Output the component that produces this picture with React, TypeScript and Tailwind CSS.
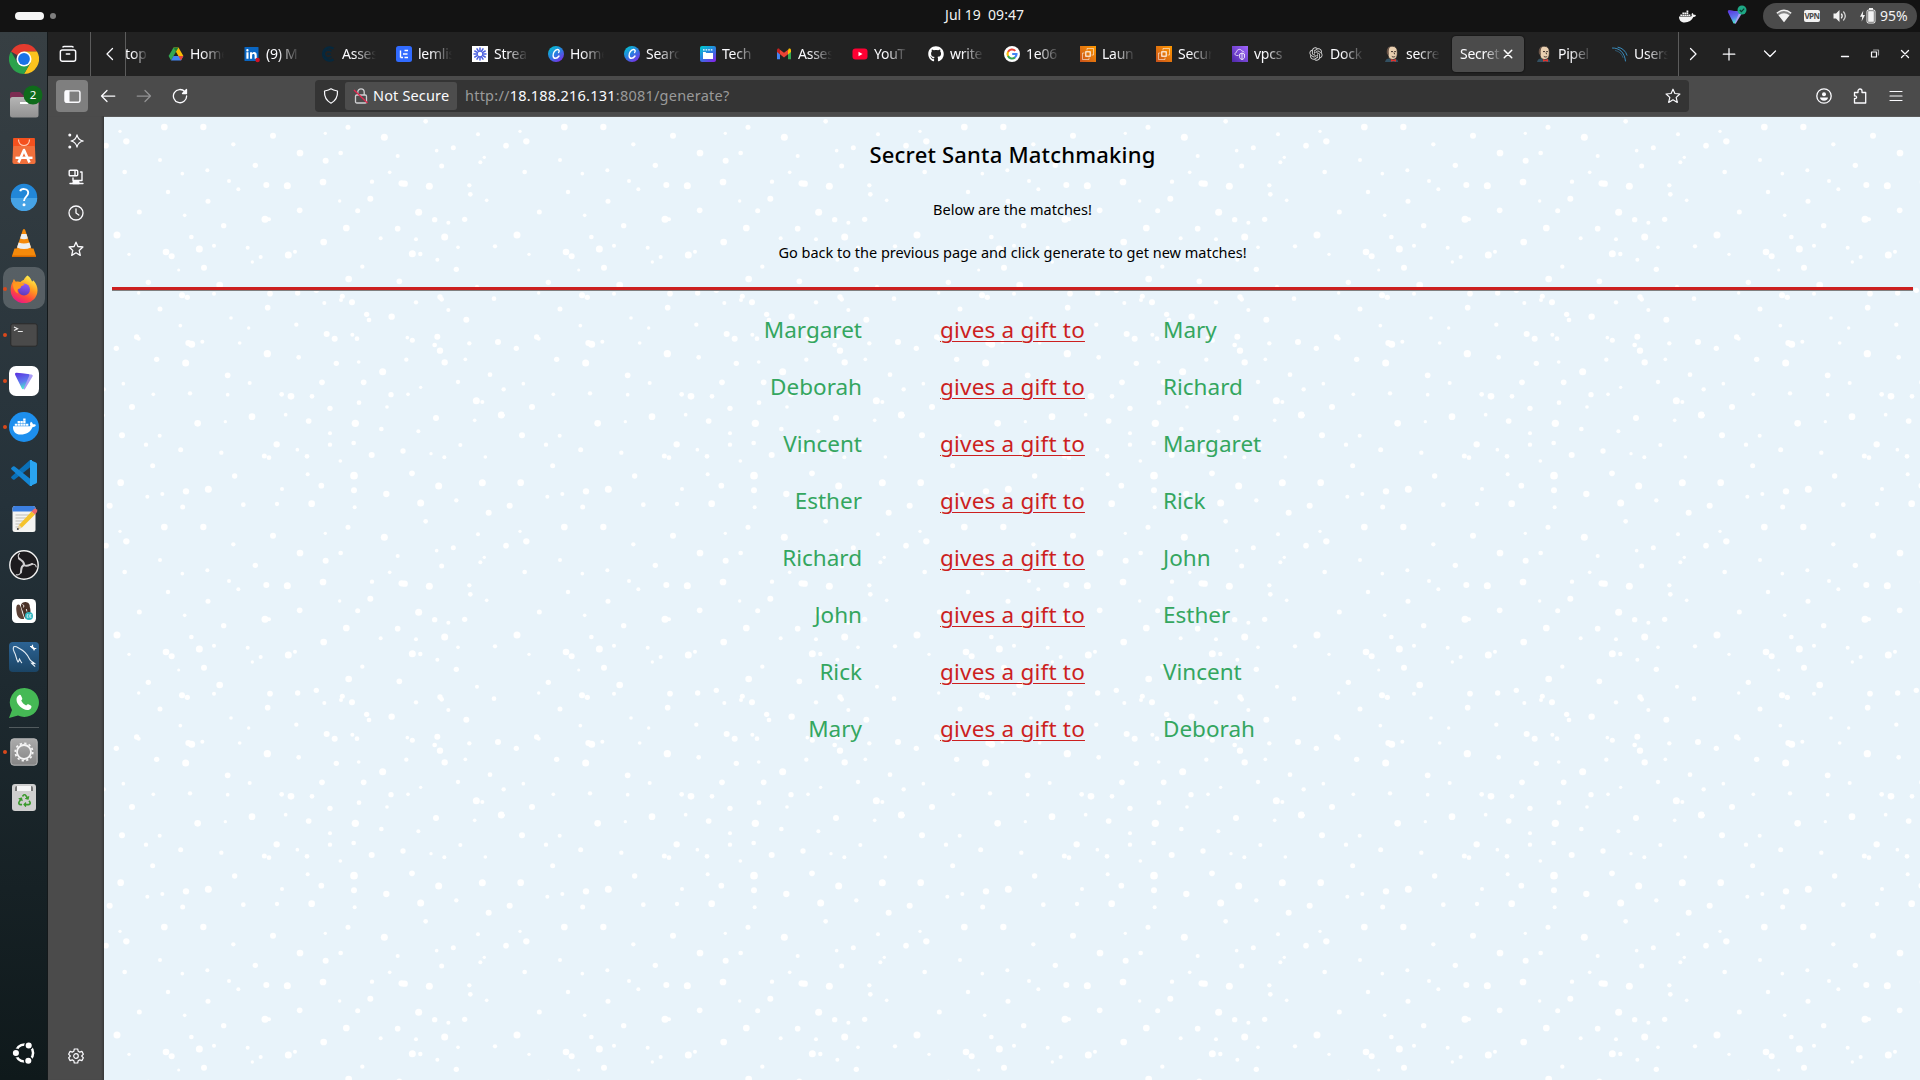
import type { ReactNode } from "react";
import { FaDocker, FaGithub, FaRecycle } from "react-icons/fa";
import { RiOpenaiFill } from "react-icons/ri";

/* Snowflakes of one 400px tile, on a 1200-unit grid: x, y, radius */
const FLAKES: number[][] = [
  [181, 30, 10], [298, 30, 9.5], [48, 43, 5], [67, 73, 9.5], [6, 86, 8.5], [1206, 86, 8.5], [388, 82, 6.5], [507, 56, 9], [664, 49, 5], [732, 31, 7.5],
  [841, 61, 10.5], [965, 13, 7], [1122, 52, 6], [1048, 92, 7.5], [998, 101, 5.5], [588, 108, 10], [710, 108, 7], [665, 131, 9], [881, 117, 6], [1141, 121, 5],
  [1129, 136, 6], [1013, 147, 7.5], [168, 129, 6], [62, 165, 7], [310, 160, 6], [235, 170, 5.5], [454, 145, 8], [375, 192, 6], [403, 217, 6], [487, 204, 9],
  [550, 206, 10.5], [657, 195, 10], [804, 194, 6.5], [857, 166, 5.5], [893, 199, 9.5], [902, 200, 9.5], [976, 208, 10.5], [1096, 205, 6.5], [1099, 232, 7], [1148, 250, 5.5],
  [799, 245, 9], [707, 252, 5], [761, 281, 7.5], [944, 286, 10.5], [992, 308, 8], [1033, 317, 6], [1082, 307, 8], [192, 225, 6.5], [312, 253, 7.5], [106, 285, 7.5],
  [242, 295, 5.5], [359, 326, 8], [483, 307, 10.5], [495, 307, 6], [587, 280, 8.5], [727, 333, 10], [881, 335, 8.5], [830, 364, 6], [936, 367, 6], [1022, 360, 10.5],
  [1062, 391, 5.5], [1173, 388, 6.5], [39, 354, 10.5], [262, 360, 7], [286, 396, 10.5], [330, 386, 6], [431, 392, 6], [470, 420, 6], [445, 435, 5], [553, 414, 10.5],
  [573, 404, 6], [659, 375, 10], [75, 412, 5], [186, 405, 10], [203, 418, 9], [224, 459, 4.5], [300, 452, 9], [133, 496, 8], [347, 504, 10], [775, 449, 6.5],
  [734, 486, 10], [886, 493, 8.5], [925, 410, 10.5], [949, 411, 6.5], [1000, 428, 6], [1057, 457, 8], [1119, 509, 6], [104, 528, 5], [234, 535, 9], [250, 541, 8],
  [330, 530, 6], [498, 530, 8.5], [581, 528, 8], [637, 520, 8], [661, 558, 6], [715, 538, 7.5], [711, 549, 6], [744, 556, 9], [936, 556, 6.5], [1008, 540, 8],
  [1013, 547, 7], [1170, 545, 7], [1033, 579, 6], [168, 576, 7.5], [381, 603, 5.5], [491, 572, 8.5], [788, 592, 8], [795, 609, 7], [863, 599, 9.5], [1087, 608, 9],
  [229, 626, 5.5], [434, 633, 5], [577, 623, 6.5], [668, 651, 9], [692, 665, 9], [745, 653, 6], [759, 665, 7], [910, 662, 5.5], [925, 670, 7.5], [1000, 659, 9],
  [992, 684, 7], [1008, 701, 9.5], [1096, 679, 6.5], [1182, 675, 9], [98, 660, 8], [104, 665, 6], [37, 694, 8], [253, 678, 9], [263, 682, 10.5], [295, 674, 6],
  [407, 678, 5.5], [158, 727, 8], [245, 738, 10.5], [490, 710, 11], [584, 721, 7], [697, 739, 8], [764, 735, 5.5], [907, 728, 6.5], [1022, 736, 9.5], [1084, 727, 5.5],
  [836, 764, 10.5], [371, 775, 8.5], [437, 798, 6], [654, 796, 8.5], [779, 796, 8.5], [1062, 795, 6.5], [1158, 773, 7], [950, 811, 5], [58, 800, 5.5], [-1, 817, 6.5],
  [1199, 817, 6.5], [148, 832, 5.5], [258, 829, 6.5], [371, 833, 5.5], [533, 832, 7], [561, 838, 10], [624, 838, 7], [861, 833, 8], [912, 832, 5.5], [765, 857, 7],
  [849, 870, 5.5], [678, 874, 8], [1117, 851, 10.5], [1135, 855, 6], [1192, 894, 10.5], [84, 870, 9], [-2, 895, 5], [281, 919, 10], [444, 899, 10], [364, 914, 5],
  [545, 893, 5.5], [614, 912, 8.5], [754, 919, 11], [996, 903, 9], [1112, 910, 5.5], [832, 936, 7], [943, 943, 6], [54, 955, 9], [167, 956, 6], [678, 949, 6],
  [126, 983, 6.5], [230, 998, 7.5], [518, 982, 9.5], [580, 998, 5.5], [678, 983, 6.5], [749, 978, 7], [1069, 984, 6], [352, 1007, 6.5], [897, 1002, 8], [981, 1010, 5],
  [803, 1014, 9], [481, 1017, 7.5], [495, 1022, 7], [609, 1018, 7], [1021, 1021, 6], [1144, 1020, 5.5], [709, 1032, 5.5], [146, 1046, 7.5], [392, 1077, 8], [611, 1072, 6],
  [750, 1076, 11.5], [924, 1069, 8.5], [50, 1097, 10], [652, 1106, 8.5], [1004, 1107, 10.5], [1135, 1097, 10.5], [246, 1123, 9.5], [313, 1117, 10.5], [534, 1116, 6], [750, 1120, 9],
  [175, 1131, 6], [130, 1139, 6], [847, 1131, 9.5], [17, 1166, 9], [236, 1170, 7.5], [418, 1163, 7], [519, 1161, 6.5], [623, 1160, 10], [752, 1171, 6], [950, 1158, 10.5],
  [1057, 1150, 6.5], [1154, 1187, 9],
];

function Snow() {
  return (
    <svg className="absolute inset-0 h-full w-full" aria-hidden="true">
      <defs>
        <pattern id="snow" width="400" height="400" patternUnits="userSpaceOnUse">
          <g transform="scale(0.33333)" fill="#ffffff">
            {FLAKES.map(([x, y, r]) => (
              <circle key={`${x}-${y}`} cx={x} cy={y} r={r} />
            ))}
          </g>
        </pattern>
      </defs>
      <rect width="100%" height="100%" fill="url(#snow)" />
    </svg>
  );
}

/* ---------- stroke icon helper ---------- */
function Line({ children, className = "", size = 16, w = 1.25 }: { children: ReactNode; className?: string; size?: number; w?: number }) {
  return (
    <svg
      className={`shrink-0 ${className}`}
      width={size}
      height={size}
      viewBox="0 0 16 16"
      fill="none"
      stroke="currentColor"
      strokeWidth={w}
      strokeLinecap="round"
      strokeLinejoin="round"
    >
      {children}
    </svg>
  );
}

const STAR = "M8 1.2 9.9 5.5 14.9 6 11.2 9.4 12.3 14.4 8 11.8 3.7 14.4 4.8 9.4 1.1 6 6.1 5.5Z";

/* ---------- favicons ---------- */
const DriveIcon = () => (
  <svg width="16" height="16" viewBox="0 0 16 16">
    <path d="M5.5 1.5h5L15.4 10h-5z" fill="#fbbc05" />
    <path d="M5.5 1.5 8 5.8 3 14.4.6 10z" fill="#34a853" />
    <path d="M5.5 1.5h5L8 5.8z" fill="#188038" />
    <path d="M5.5 10h9.9L13 14.4H3z" fill="#4285f4" />
    <path d="M10.4 10h5L13 14.4z" fill="#ea4335" />
  </svg>
);
const LinkedinIcon = () => (
  <svg width="16" height="16" viewBox="0 0 16 16" className="overflow-visible">
    <rect x="0.5" y="1" width="14" height="14" rx="0.6" fill="#0a66c2" />
    <path d="M2.4 6.3h2.1v6.5H2.4zM3.4 3.1a1.2 1.2 0 1 1 0 2.4 1.2 1.2 0 0 1 0-2.4M6 6.3h2v.9c1.1-1.7 4.7-1.6 4.7 1.7v3.9h-2.1V9.4c0-1.9-2.5-1.8-2.5 0v3.4H6z" fill="#fff" />
    <circle cx="13.6" cy="14" r="2.2" fill="#d11124" />
  </svg>
);
const AssessIcon = () => (
  <svg width="16" height="16" viewBox="0 0 16 16" fill="none" stroke="#06283d">
    <path d="M13.5 2.8A6.5 6.5 0 1 0 13.5 13.2" strokeWidth="2.4" />
    <path d="M11.5 5.5A4 4 0 1 0 11.5 10.5M11 8H7" strokeWidth="1.3" />
  </svg>
);
const LemlistIcon = () => (
  <svg width="16" height="16" viewBox="0 0 16 16">
    <rect width="16" height="16" rx="2.5" fill="#316bff" />
    <path d="M4.5 4.5v7M4.5 11.5h2.5M8.5 4.5h3.5M7 8h4.5M8.5 11.5h3.5" stroke="#fff" strokeWidth="1.4" fill="none" />
  </svg>
);
const StreamIcon = () => (
  <svg width="16" height="16" viewBox="0 0 16 16">
    <rect width="16" height="16" fill="#fff" />
    <g stroke="#4a5fe0" strokeWidth="1.5" strokeLinecap="round">
      {[0, 30, 60, 90, 120, 150, 180, 210, 240, 270, 300, 330].map((a) => (
        <path key={a} d="M8 2v2.800" transform={`rotate(${a} 8 8)`} />
      ))}
    </g>
    <circle cx="8" cy="8" r="2.8" fill="none" stroke="#4a5fe0" strokeWidth="1" />
  </svg>
);
const CanvaGradient = () => (
  <linearGradient id="canva" x1="0.1" y1="0" x2="0.8" y2="1">
    <stop offset="0" stopColor="#00c8cf" />
    <stop offset="0.5" stopColor="#2a7fe0" />
    <stop offset="1" stopColor="#7d2ae8" />
  </linearGradient>
);
const CanvaIcon = () => (
  <svg width="16" height="16" viewBox="0 0 16 16">
    <defs><CanvaGradient /></defs>
    <circle cx="8" cy="8" r="8" fill="url(#canva)" />
    <path d="M10.6 6.4c1-1 .7-3-1.1-2.900C7 3.700 4.900 7 5.100 9.600c.2 3.700 3.900 3.400 5.900.4" fill="none" stroke="#fff" strokeWidth="1.4" strokeLinecap="round" />
  </svg>
);
const TechIcon = () => (
  <svg width="16" height="16" viewBox="0 0 16 16">
    <defs><CanvaGradient /></defs>
    <rect width="16" height="16" rx="2" fill="url(#canva)" />
    <path d="M3 3.800h1.600M5.600 3.800h1.600M8.200 3.800h1.600M10.800 3.800h1.600" stroke="#fff" strokeWidth="1.2" />
    <path d="M3 6h2.500l.8.900H13V13H3z" fill="#fff" />
  </svg>
);
const GmailIcon = () => (
  <svg width="16" height="16" viewBox="0 0 16 16">
    <path d="M1 5v8.300h3V7z" fill="#4285f4" />
    <path d="M15 5v8.300h-3V7z" fill="#34a853" />
    <path d="M4 4.200v4.200L1 6V4.200c0-1.500 1.500-2 2.500-1.200z" fill="#c5221f" />
    <path d="M12 4.200v4.200L15 6V4.200c0-1.500-1.500-2-2.500-1.200z" fill="#fbbc04" />
    <path d="M4 3.700 8 6.800l4-3.100v4.500l-4 3.200-4-3.200z" fill="#ea4335" />
  </svg>
);
const YoutubeIcon = () => (
  <svg width="16" height="16" viewBox="0 0 16 16">
    <rect x="0.5" y="2.5" width="15" height="11" rx="3" fill="#ff0033" />
    <path d="M6.500 5.700v4.600L10.500 8z" fill="#fff" />
  </svg>
);
const GithubIcon = () => <FaGithub size={16} color="#fff" />;
const GoogleIcon = () => (
  <svg width="16" height="16" viewBox="0 0 16 16" fill="none" strokeWidth="2.1">
    <circle cx="8" cy="8" r="8" fill="#fff" />
    <path d="M11.300 4.900A4.500 4.500 0 0 0 4 6" stroke="#ea4335" />
    <path d="M4.100 5.800a4.500 4.500 0 0 0 0 4.400" stroke="#fbbc05" />
    <path d="M4 10a4.500 4.500 0 0 0 7 1.400" stroke="#34a853" />
    <path d="M10.900 11.500A4.500 4.500 0 0 0 12.500 8H8.200" stroke="#4285f4" />
  </svg>
);
const Ec2Icon = () => (
  <svg width="16" height="16" viewBox="0 0 16 16" fill="none" stroke="#fff" strokeWidth="0.9">
    <defs>
      <linearGradient id="ec2" x1="0" y1="1" x2="1" y2="0">
        <stop offset="0" stopColor="#c8511b" />
        <stop offset="1" stopColor="#ff9900" />
      </linearGradient>
    </defs>
    <rect width="16" height="16" fill="url(#ec2)" stroke="none" />
    <rect x="5.8" y="5.8" width="4.400" height="4.400" strokeWidth="1.1" />
    <path d="M4.500 7H2.500v6.500H9V11.500M7 4.500V2.500h6.500V9H11.500" opacity="0.6" />
  </svg>
);
const VpcIcon = () => (
  <svg width="16" height="16" viewBox="0 0 16 16" fill="none" stroke="#fff" strokeWidth="0.9">
    <defs>
      <linearGradient id="vpc" x1="0" y1="1" x2="1" y2="0">
        <stop offset="0" stopColor="#4d27a8" />
        <stop offset="1" stopColor="#a166ff" />
      </linearGradient>
    </defs>
    <rect width="16" height="16" fill="url(#vpc)" stroke="none" />
    <path d="M6.500 9.500H4.700C2.500 9.500 2.400 6.500 4.500 6.300 4.600 3 9 2.300 10 5.200c1.500-.2 2 .6 2.200 1.300" opacity="0.8" />
    <path d="M7.700 8 10 7l2.400 1v3.500c0 1-1.200 1.500-2.400 2-1.200-.5-2.300-1-2.300-2zM10 7v6.500" />
  </svg>
);
const OpenAiIcon = () => <RiOpenaiFill size={16} color="#d6d6d6" />;
const JenkinsIcon = () => (
  <svg width="16" height="16" viewBox="0 0 16 16">
    <path d="M1 16c.5-2.500 2-3.500 4-3.500l6 .5c1.800 0 3 1.300 3.200 3z" fill="#335061" />
    <path d="M3.200 6C3 2 5.500.3 8.300.3c3.200 0 5 2 4.900 5.200 0 1.500.3 3-.4 5-.6 2-2.300 3.100-4.300 3-2.500-.1-3.800-1.500-4.200-3.500z" fill="#e9cfb0" stroke="#2a2422" strokeWidth="0.7" />
    <path d="M3 8C2.200 4.500 3.500 1.500 6 .8 4.800 2.500 5 4 4.700 5.500L4.900 9z" fill="#6b5548" />
    <path d="M7 5.600h2M10.200 5.600h1.700M7.800 10.400c1.300.9 2.500.6 3.400 0M10 6.500l.6 1.800" stroke="#3a2d28" strokeWidth="1" fill="none" />
    <path d="m7 13 2.200 1L12 13v2.700l-2.800-.8L7 15.700z" fill="#e0332c" />
  </svg>
);
const UsersIcon = () => (
  <svg width="16" height="16" viewBox="0 0 16 16" fill="none" stroke="#3a8cbd" strokeLinecap="round">
    <path d="M.5 2C7 1.800 12.500 6 13.500 15" strokeWidth="1" />
    <path d="M6 1.200c4.500.8 7.800 4 9 8" strokeWidth="1" />
    <path d="M3.500 4.500C7.500 5.300 10 8.200 11 11.500" strokeWidth="0.5" />
  </svg>
);

type Tab = { title: string; icon?: () => ReactNode; active?: boolean };
const TABS: Tab[] = [
  { title: "Home", icon: DriveIcon },
  { title: "(9) M", icon: LinkedinIcon },
  { title: "Asses", icon: AssessIcon },
  { title: "lemlis", icon: LemlistIcon },
  { title: "Strea", icon: StreamIcon },
  { title: "Home", icon: CanvaIcon },
  { title: "Searc", icon: CanvaIcon },
  { title: "Tech", icon: TechIcon },
  { title: "Asses", icon: GmailIcon },
  { title: "YouT", icon: YoutubeIcon },
  { title: "write", icon: GithubIcon },
  { title: "1e06", icon: GoogleIcon },
  { title: "Laun", icon: Ec2Icon },
  { title: "Secur", icon: Ec2Icon },
  { title: "vpcs", icon: VpcIcon },
  { title: "Dock", icon: OpenAiIcon },
  { title: "secre", icon: JenkinsIcon },
  { title: "Secret", active: true },
  { title: "Pipel", icon: JenkinsIcon },
  { title: "Users", icon: UsersIcon },
];

function TabItem({ tab }: { tab: Tab }) {
  if (tab.active) {
    return (
      <div className="mr-1 flex h-9 w-[72px] shrink-0 items-center rounded-[4px] bg-[#4b4b4b] pl-2 shadow-[0_0_2px_#000]">
        <span className="w-[42px] shrink-0 overflow-hidden whitespace-nowrap pb-0.5 text-[14px] tracking-[-0.25px] text-[#fbfbfe] [mask-image:linear-gradient(to_right,#000_60%,transparent)]">
          {tab.title}
        </span>
        <Line className="text-white" size={12} w={2}>
          <path d="m3 3 10 10M13 3 3 13" />
        </Line>
      </div>
    );
  }
  const Icon = tab.icon!;
  return (
    <div className="flex h-9 w-[76px] shrink-0 items-center pl-2">
      <span className="flex size-4 shrink-0">
        <Icon />
      </span>
      <span className="ml-1.5 w-[34px] overflow-hidden whitespace-nowrap pb-0.5 text-[14px] tracking-[-0.25px] text-[#fbfbfe] [mask-image:linear-gradient(to_right,#000_35%,transparent)]">
        {tab.title}
      </span>
    </div>
  );
}

/* ---------- dock ---------- */
const ChromeApp = () => (
  <svg width="30" height="30" viewBox="0 0 30 30">
    <path d="M15 15 2 7.500A15 15 0 0 1 28 7.500H15z" fill="#e33b2e" />
    <path d="M28 7.500H15v7.500L21.500 18.800 15 30A15 15 0 0 0 28 7.500" fill="#fcc31e" />
    <path d="M2 7.500A15 15 0 0 0 15 30l6.400-11.200L15 15l-6.400 3.700z" fill="#2ba24c" />
    <circle cx="15" cy="15" r="7.5" fill="#fff" />
    <circle cx="15" cy="15" r="5.9" fill="#1a73e8" />
  </svg>
);
const FilesApp = () => (
  <svg width="36" height="38" viewBox="0 0 36 38" className="overflow-visible">
    <defs>
      <linearGradient id="files" x1="0" y1="0" x2="0" y2="1">
        <stop offset="0" stopColor="#b5b5b5" />
        <stop offset="1" stopColor="#929292" />
      </linearGradient>
    </defs>
    <path d="M4 8q0-2 2-2h8l3 3h14q2 0 2 2v8H4z" fill="#7c2c52" />
    <rect x="4" y="11" width="28.5" height="20.5" rx="2.5" fill="url(#files)" />
    <path d="M14 17h8" stroke="#fff" strokeWidth="2" />
    <circle cx="27" cy="9" r="9.5" fill="#0f6b1b" />
    <text x="27" y="13" textAnchor="middle" fontSize="11.5" fill="#fff" className="font-['Noto_Sans',sans-serif]">2</text>
  </svg>
);
const SoftwareApp = () => (
  <svg width="24" height="28" viewBox="0 0 24 28">
    <path d="M2.500 1h19q1 0 1.100 1l1 23q0 2-2 2H2.400q-2 0-2-2L1.400 2q.1-1 1.100-1z" fill="#f1703c" />
    <path d="M1.400 1h21.200l.4 8H1z" fill="#f4511e" />
    <path d="M6.500 2.500c0 8 11 8 11 0" fill="none" stroke="#ffd0b8" strokeWidth="1.2" />
    <path d="M6.500 25.500 12 13l5.500 12.500" fill="none" stroke="#fff" strokeWidth="2.6" strokeLinejoin="round" />
    <path d="M3.500 20.800h17" stroke="#fff" strokeWidth="2.4" />
  </svg>
);
const HelpApp = () => (
  <svg width="28" height="28" viewBox="0 0 28 28">
    <circle cx="14" cy="14" r="13.2" fill="#2287d8" />
    <path d="M.8 15h26.400A13.200 13.200 0 0 1 .8 15" fill="#46a3e6" />
    <path d="M10.200 8.200C11 5.200 18.200 5 18.200 9.800c0 4-4.200 3.700-4.200 8.200" fill="none" stroke="#fff" strokeWidth="1.9" />
    <circle cx="14" cy="21.7" r="1.5" fill="#fff" />
  </svg>
);
const VlcApp = () => (
  <svg width="26" height="30" viewBox="0 0 26 30">
    <path d="M3.500 20.500h19L25 28q.3 1-1 1H2q-1.300 0-1-1z" fill="#f58a0b" />
    <path d="M11.800 2q1.200-2 2.400 0L20.500 21q-7.500 4.500-15 0z" fill="#f58a0b" />
    <path d="m10.500 6 5 0 1.400 4.500q-3.900 1.600-7.800 0zM7.600 14.500q5.400 2.200 10.800 0l1.600 5q-7 3-14 0z" fill="#eceff1" />
    <path d="M1 27.500h24v1.500H1z" fill="#d96a00" />
  </svg>
);
const FirefoxApp = () => (
  <svg width="28" height="28" viewBox="0 0 28 28">
    <defs>
      <linearGradient id="fx" x1="0.8" y1="0.05" x2="0.3" y2="1">
        <stop offset="0" stopColor="#fff44f" />
        <stop offset="0.4" stopColor="#ff9a1f" />
        <stop offset="0.7" stopColor="#ff4a3d" />
        <stop offset="1" stopColor="#e8168a" />
      </linearGradient>
      <linearGradient id="fxg" x1="0.6" y1="0" x2="0.4" y2="1">
        <stop offset="0" stopColor="#9059ff" />
        <stop offset="1" stopColor="#5b3bb8" />
      </linearGradient>
    </defs>
    <path d="M17.500.5c3 2 4 4.500 4.500 6 1-.3 1.200-.7 1.300-1.200 3 3.500 4.200 6.500 4.200 10A13.400 12.800 0 0 1 .7 15.500C.5 12 1.500 8.500 3 6.500c.2-.8.200-1.500 1-2.500.5 1.200 1 2 2 2.700 1.500-.5 3-.3 4.500.2 1-1.200 2-1.600 3.200-2C14.500 3.500 15.500 2 17.500.5z" fill="url(#fx)" />
    <circle cx="14" cy="14.5" r="6" fill="url(#fxg)" />
    <path d="M3 8.500c2.500-1 5-.5 6.500.5h5c-.4 1.500-2.700 1.800-3.500 2.500 0 2-1.500 2-3 2.500-1 .8-1 2.500.5 4.500C4.500 17.500 3 13 3 8.500z" fill="#ff9a1f" />
  </svg>
);
const TerminalApp = () => (
  <svg width="28" height="24" viewBox="0 0 28 24">
    <rect x="0.8" y="0.8" width="26.4" height="22.4" rx="2" fill="#4a4a4a" stroke="#2a2a2a" />
    <path d="m4 4 3.500 1.700L4 7.500M7.800 8.500h5" stroke="#e8e8e8" strokeWidth="1.2" fill="none" />
  </svg>
);
const ProtonMark = ({ size, id }: { size: number; id: string }) => (
  <svg width={size} height={size} viewBox="0 0 20 20">
    <defs>
      <linearGradient id={id} x1="0.2" y1="0" x2="0.5" y2="1">
        <stop offset="0" stopColor="#5b35e0" />
        <stop offset="0.6" stopColor="#5f7df0" />
        <stop offset="1" stopColor="#46f0c8" />
      </linearGradient>
    </defs>
    <path d="M2 2 17.500 3.500q2 .3 1 2L11 18q-1 1-1.500 0z" fill="#a99bf5" />
    <path d="M1 3q0-1.500 1.800-1.300L14 3q2 .3 1 2.200L9.700 17.500q-1 1.500-1.800 0L1.200 4z" fill={`url(#${id})`} />
  </svg>
);
const ProtonApp = () => (
  <span className="flex size-[30px] items-center justify-center rounded-[7px] bg-white">
    <ProtonMark size={20} id="proton-app" />
  </span>
);
const DockerApp = () => (
  <span className="flex size-[30px] items-center justify-center rounded-full bg-[#1d8fee]">
    <FaDocker size={23} color="#fff" />
  </span>
);
const CodeApp = () => (
  <svg width="28" height="28" viewBox="0 0 28 28">
    <path d="M20 1 1.500 17.500q-1 1 0 1.800l1.400 1.200q.9.700 1.800 0L20.500 8z" fill="#0a70b8" />
    <path d="M20 27 1.500 10.500q-1-1 0-1.800l1.400-1.200q.9-.7 1.800 0L20.500 20z" fill="#1486d4" />
    <path d="M20 1l6 2.500q1 .5 1 1.500v18q0 1-1 1.500L20 27q1.200-.5 1.200-2V3q0-1.500-1.200-2" fill="#2aa4f0" />
    <path d="M20 1h2v26h-2z" fill="#2aa4f0" />
  </svg>
);
const EditorApp = () => (
  <svg width="30" height="28" viewBox="0 0 30 28">
    <rect x="3.5" y="1" width="23" height="26" rx="2.5" fill="#f4f4f2" />
    <path d="M3.500 6.500v-3Q3.500 1 6 1h18q2.500 0 2.500 2.500v3z" fill="#3c7fe0" />
    <path d="M6.500 10h14M6.500 13h12M6.500 16h10M6.500 19h6M6.500 22h3" stroke="#bdbdb8" />
    <path d="M8.500 24.500 10 20 22.500 6.500l3.500 3L13 22.500z" fill="#f5c32c" />
    <path d="M22.500 6.500 25 4q1-1 2.500.3T28 7l-2 2.500z" fill="#ee6a6a" />
    <path d="M8.500 24.500 10 20l3 2.500z" fill="#e7d3b0" />
    <circle cx="8.8" cy="24" r="1" fill="#444" />
  </svg>
);
const ObsApp = () => (
  <svg width="30" height="30" viewBox="0 0 30 30">
    <circle cx="15" cy="15" r="14.2" fill="#1d1b1e" stroke="#f2f2f2" strokeWidth="1.4" />
    <g fill="none" stroke="#cfcdcf" strokeLinecap="round">
      {[0, 120, 240].map((a) => (
        <g key={a} transform={`rotate(${a} 15 15)`}>
          <path d="M15 15C15.500 11 12 10.500 10 8.500" strokeWidth="2" />
          <path d="M10.500 9C8.800 7 8.800 4.800 10.500 3.500" strokeWidth="1.1" />
        </g>
      ))}
    </g>
  </svg>
);
const DbeaverApp = () => (
  <svg width="24" height="24" viewBox="0 0 24 24">
    <rect width="24" height="24" rx="4.5" fill="#fff" />
    <path d="M5 6c2-1.500 3.500 0 4.500 5s3 7 2.500 9c-4 .5-6.500-2-7.200-5.500C4.200 11 3.800 8 5 6z" fill="#5a4035" />
    <path d="M9 6c.5-2 3-3.300 5.500-2.800 2.500.4 3.500 2.500 3.300 4.800C19.500 13 18 18 15 20c-2.500 0-3.200-4-4-7S8.600 8 9 6z" fill="#4a3229" />
    <path d="m10.500 5.500 1.500 1.200-.6 1.800M14.300 10l.6 2.500" stroke="#e9e2dd" strokeWidth="1" fill="none" />
    <circle cx="17" cy="17" r="4" fill="#2fb5c0" />
    <path d="M16.500 15.700h-1.300v2.600h1.300M19.500 15.700h-1.700v2.600h1.700M17.800 17h1.400" stroke="#fff" strokeWidth="0.7" fill="none" />
  </svg>
);
const MysqlApp = () => (
  <svg width="30" height="30" viewBox="0 0 30 30">
    <defs>
      <linearGradient id="mysql" x1="0" y1="0" x2="0" y2="1">
        <stop offset="0" stopColor="#2c6394" />
        <stop offset="1" stopColor="#1b4464" />
      </linearGradient>
    </defs>
    <rect width="30" height="30" rx="4" fill="url(#mysql)" />
    <path d="M13 21c-1.500-1-1.500-2.500-2.500-4-.5 1.500-.5 2-1.500 3C7 17 7.500 14 5.500 10.500 4.500 8.500 3.500 7 4.500 5c2-1.500 4 .5 6 1.500 5 2.500 8 6 10 10.500.5 1.500 2.500 2.500 5 4.500l-3-.3c1 1.500 3 2 3.500 3.500" fill="none" stroke="#e8f0f6" strokeWidth="1.1" />
    <path d="m22.300 4.500 3.400 2.800" stroke="#fff" strokeWidth="2" />
    <path d="M21 4.500h2.500V2.800M25 8.500l.3-2h2" stroke="#fff" strokeWidth="1.2" fill="none" />
  </svg>
);
const WhatsappApp = () => (
  <svg width="30" height="30" viewBox="0 0 30 30">
    <path d="M15.500 0a14.500 14.500 0 1 1-6.500 27.500L0 30l3-8A14.500 14.500 0 0 1 15.500 0z" fill="#45b955" />
    <path d="M10 7.200c1-.7 1.800-.2 2.200.8l1 2.300c.3.900-.2 1.400-1 2.200 1 2.200 2.700 3.900 5 5 .8-1 1.400-1.600 2.200-1.200l2.400 1.300c.8.500.9 1.200.3 2.300-1.300 2.500-4.600 2.800-8 .8C10 18.400 7 14.500 7.600 10.500c.3-1.500 1.300-2.600 2.400-3.300z" fill="#fff" />
  </svg>
);
const SettingsApp = () => (
  <svg width="28" height="28" viewBox="0 0 28 28">
    <defs>
      <linearGradient id="set" x1="0" y1="0" x2="0" y2="1">
        <stop offset="0" stopColor="#ababab" />
        <stop offset="1" stopColor="#858585" />
      </linearGradient>
    </defs>
    <rect x="0.8" y="0.8" width="26.4" height="26.4" rx="3" fill="url(#set)" stroke="#b8b8b8" />
    <circle cx="14" cy="14" r="7" fill="none" stroke="#f4f4f4" strokeWidth="1.8" />
    <circle cx="14" cy="14" r="8.7" fill="none" stroke="#f4f4f4" strokeWidth="1.8" strokeDasharray="2.27 2.28" />
  </svg>
);
const TrashApp = () => (
  <span className="relative flex h-[27px] w-6 items-end justify-center rounded-[3px] bg-[#cfcfcf] pb-1">
    <span className="absolute inset-x-[3px] top-[2px] h-[5px] rounded-t-[2px] border-x-2 border-[#777] bg-[#f5f5f5]" />
    <FaRecycle size={13} color="#3a9a2c" />
  </span>
);
const UbuntuMark = () => (
  <svg width="24" height="24" viewBox="0 0 24 24">
    <circle cx="12.5" cy="12" r="8.6" fill="none" stroke="#fff" strokeWidth="2.5" />
    <g fill="#fff" stroke="#10191c" strokeWidth="1.5">
      <circle cx="3.9" cy="12" r="3.8" />
      <circle cx="16.7" cy="4.5" r="3.8" />
      <circle cx="16.3" cy="19.8" r="3.8" />
    </g>
  </svg>
);

type DockItem = { icon: () => ReactNode; running?: boolean; focused?: boolean };
const DOCK: DockItem[] = [
  { icon: ChromeApp },
  { icon: FilesApp },
  { icon: SoftwareApp },
  { icon: HelpApp },
  { icon: VlcApp },
  { icon: FirefoxApp, running: true, focused: true },
  { icon: TerminalApp, running: true },
  { icon: ProtonApp, running: true },
  { icon: DockerApp, running: true },
  { icon: CodeApp },
  { icon: EditorApp },
  { icon: ObsApp },
  { icon: DbeaverApp },
  { icon: MysqlApp },
  { icon: WhatsappApp },
];
const DOCK_END: DockItem[] = [{ icon: SettingsApp, running: true }, { icon: TrashApp }];

function DockButton({ item }: { item: DockItem }) {
  const Icon = item.icon;
  return (
    <div className="relative flex h-[46px] w-full shrink-0 items-center justify-center">
      {item.focused && <span className="absolute left-[3px] top-px size-[42px] rounded-[10px] bg-white/20" />}
      {item.running && <span className="absolute left-[3px] top-[21px] size-1 rounded-full bg-[#d9481c]" />}
      <span className="relative mb-px flex">
        <Icon />
      </span>
    </div>
  );
}

function Dock() {
  return (
    <nav className="flex w-12 shrink-0 flex-col items-center bg-gradient-to-b from-[#373f43] via-[#25323a] via-45% to-[#0f191b] pt-1 shadow-[inset_-1px_0_0_#14191b]">
      {DOCK.map((d, i) => (
        <DockButton key={i} item={d} />
      ))}
      <div className="mt-px h-px w-[30px] shrink-0 bg-[#525b5e]" />
      <div className="mt-px flex w-full flex-col">
        {DOCK_END.map((d, i) => (
          <DockButton key={i} item={d} />
        ))}
      </div>
      <div className="mt-auto mb-[15px]">
        <UbuntuMark />
      </div>
    </nav>
  );
}

/* ---------- system bar ---------- */
function SystemBar() {
  return (
    <header className="grid h-8 shrink-0 grid-cols-[1fr_auto_1fr] items-center bg-[#131313] text-[#f2f2f2]">
      <div className="flex items-center gap-1.5 pl-[15px]">
        <span className="h-2 w-[29px] rounded-full bg-[#f6f6f6]" />
        <span className="size-1.5 rounded-full bg-[#7f7f7f]" />
      </div>
      <div className="ml-[49px] w-[81px] whitespace-pre pb-[3px] text-center text-[14px]">Jul 19  09:47</div>
      <div className="flex items-center justify-end pr-[3px]">
        <FaDocker size={17} color="#f4f4f4" />
        <span className="relative ml-[31px] mr-5 mt-0.5 flex">
          <ProtonMark size={16} id="proton-tray" />
          <svg className="absolute -right-1 -top-1" width="10" height="10" viewBox="0 0 10 10">
            <circle cx="5" cy="5" r="4.5" fill="#1ea885" />
            <path d="m2.800 5 1.600 1.600 2.800-3" stroke="#0b3b30" strokeWidth="1.2" fill="none" />
          </svg>
        </span>
        <div className="flex h-[26px] w-[154px] items-center rounded-full bg-[#4b4b4b] pl-[13px]">
          <svg width="16" height="16" viewBox="0 0 16 16" fill="#f2f2f2">
            <path d="M8 14.200.8 5.300Q8-.8 15.200 5.300z" opacity="0.35" />
            <path d="M.8 5.300Q8-.8 15.200 5.300" fill="none" stroke="#f2f2f2" strokeWidth="1.4" />
            <path d="m8 14.200-5.500-7q5.500-3.800 11 0z" />
          </svg>
          <span className="ml-3 flex h-3 w-4 items-center justify-center rounded-[2px] bg-[#f2f2f2] text-[8px] font-bold leading-none tracking-[-0.5px] text-[#4b4b4b]">
            VPN
          </span>
          <svg className="ml-3" width="16" height="16" viewBox="0 0 16 16" fill="none" stroke="#f2f2f2" strokeWidth="1.3">
            <path d="M1.500 5.500h2.500L7.500 2v12L4 10.500H1.500z" fill="#f2f2f2" stroke="none" />
            <path d="M9.300 5.700q1.800 2.300 0 4.600" />
            <path d="M11.300 3.500q4 4.500 0 9" opacity="0.8" />
          </svg>
          <svg className="ml-[11px]" width="17" height="16" viewBox="0 0 17 16">
            <path d="M4.300 2.500 1 8.800h2.200L2.600 13.500 6 7H3.800z" fill="#f2f2f2" />
            <rect x="8" y="2" width="8" height="13" rx="1.5" fill="#f2f2f2" stroke="#f2f2f2" />
            <rect x="8.7" y="2.7" width="6.6" height="11.6" rx="1" fill="none" stroke="#4b4b4b" strokeWidth="0.7" />
            <rect x="10" y="0" width="4" height="2" fill="#f2f2f2" />
          </svg>
          <span className="ml-1 pb-0.5 text-[14px]">95%</span>
        </div>
      </div>
    </header>
  );
}

/* ---------- browser chrome ---------- */
function TabStrip() {
  return (
    <div className="flex h-11 shrink-0 items-center bg-[#222222] text-[#fbfbfe]">
      <div className="flex h-full w-[43px] shrink-0 items-center justify-center border-r border-[#5c5c5c] pr-[3px]">
        <Line size={18} w={1.3}>
          <rect x="1.2" y="4.5" width="13.6" height="10" rx="1.8" />
          <path d="M3.500 1.800c.3-.4.500-.5 1-.5h7c.5 0 .7.100 1 .5M6.500 8h3" />
        </Line>
      </div>
      <div className="flex h-full w-[35px] shrink-0 items-center justify-center border-r border-[#5c5c5c]">
        <Line className="ml-[3px]">
          <path d="M10.500 2.500 5 8l5.500 5.500" />
        </Line>
      </div>
      <div className="flex h-full w-[1552px] shrink-0 items-center overflow-hidden">
        <div className="w-[34px] shrink-0">
          <span className="-ml-px block w-[23px] overflow-hidden whitespace-nowrap pb-0.5 text-[14px] tracking-[-0.1px] [mask-image:linear-gradient(to_right,#000_35%,transparent)]">
            top
          </span>
        </div>
        {TABS.map((t, i) => (
          <TabItem key={i} tab={t} />
        ))}
      </div>
      <div className="flex h-full flex-1 items-center border-l border-[#5c5c5c]">
        <Line className="ml-1.5">
          <path d="M5.500 2.500 11 8l-5.500 5.500" />
        </Line>
        <Line className="ml-5">
          <path d="M8 2.500v11.500M2.300 8.200h11.500" />
        </Line>
        <Line className="ml-[25px]">
          <path d="M2.500 5 8 10.500 13.500 5" />
        </Line>
        <Line className="ml-[59px]" w={1.3}>
          <path d="M4.500 10.500h7" />
        </Line>
        <Line className="ml-3.5" w={1.2}>
          <path d="M4.500 6h5v5h-5z" />
          <path d="M6.500 4h5v5" opacity="0.6" />
        </Line>
        <Line className="ml-3.5" w={1.3}>
          <path d="m4.500 4.500 7 7M11.500 4.500l-7 7" />
        </Line>
      </div>
    </div>
  );
}

function Toolbar() {
  return (
    <div className="flex h-10 shrink-0 items-center bg-[#4b4b4b] pl-2 text-[#fbfbfe]">
      <div className="flex size-8 shrink-0 items-center justify-center rounded-[4px] bg-[#7f7f7f]">
        <Line size={17} w={1.4}>
          <rect x="1" y="2.7" width="14" height="10.6" rx="1.5" />
          <path d="M1.500 3h3v10h-3z" fill="currentColor" />
        </Line>
      </div>
      <Line className="ml-3">
        <path d="M14.800 8H1.500M7 2.500 1.500 8 7 13.500" />
      </Line>
      <Line className="ml-5 opacity-40">
        <path d="M1.200 8h13.300M9 2.500 14.500 8 9 13.500" />
      </Line>
      <Line className="ml-5" w={1.3}>
        <path d="M12.900 3.700A6.600 6.600 0 1 0 14.600 8" />
        <path d="M14.500 1.500v4h-4z" fill="currentColor" />
      </Line>
      <div className="ml-[127px] flex h-8 w-[1374px] shrink-0 items-center rounded-[4px] bg-[#343434] pr-2">
        <Line className="ml-2" w={1.2}>
          <path d="M8 .8c2 1.500 4 1.800 6.500 2.200.3 5-1.500 9.500-6.500 12.200C3 12.500 1.200 8 1.500 3 4 2.600 6 2.300 8 .8z" />
        </Line>
        <div className="ml-1.5 flex h-7 w-[112px] items-center rounded-[3px] bg-[#4d4d4d] pl-2">
          <svg width="16" height="16" viewBox="0 0 16 16" fill="none">
            <rect x="2.5" y="7" width="11" height="8" rx="1.3" stroke="#d0d0d2" strokeWidth="1.3" />
            <path d="M4.800 7V4a3.200 3.200 0 0 1 6.400 0v3" stroke="#d0d0d2" strokeWidth="1.3" />
            <path d="m1 2 13.500 13" stroke="#e22850" strokeWidth="1.4" />
          </svg>
          <span className="ml-1 whitespace-nowrap text-[14.5px] tracking-[0.15px]">Not Secure</span>
        </div>
        <span className="ml-2 flex-1 whitespace-nowrap text-[14.5px] tracking-[0.23px] text-[#9a9a9a]">
          http://<span className="text-[#fbfbfe]">18.188.216.131</span>:8081/generate?
        </span>
        <Line w={1.2}>
          <path d={STAR} />
        </Line>
      </div>
      <Line className="ml-[127px]" w={1.3}>
        <circle cx="8" cy="8" r="7.2" />
        <circle cx="8" cy="6.3" r="2" fill="currentColor" stroke="none" />
        <path d="M4 9.500h8c0 1.800-1.700 3.200-4 3.200S4 11.300 4 9.500z" fill="currentColor" stroke="none" />
      </Line>
      <Line className="ml-5" w={1.3}>
        <path d="M2.500 15V10.500c2.800.8 2.800-3.300 0-2.500V4.500H6V3a2 2 0 0 1 4 0v1.500h3.700V15z" />
      </Line>
      <Line className="ml-5" w={1.2}>
        <path d="M2 3.500h12M2 8h12M2 12.500h12" />
      </Line>
    </div>
  );
}

function SideRail() {
  return (
    <aside className="flex w-14 shrink-0 flex-col items-center bg-[#4b4b4b] pt-[17px] text-[#fbfbfe] shadow-[inset_-3px_0_3px_-2px_rgba(0,0,0,0.35)]">
      <Line w={1.2}>
        <path d="M9 1.800c.7 3.700 2 5.300 6.200 6.200-4.200.9-5.500 2.500-6.200 6.200C8.300 10.500 7 8.900 3 8c4-.9 5.300-2.500 6-6.200z" />
        <circle cx="1.8" cy="2" r="0.9" fill="currentColor" />
        <circle cx="1.8" cy="14" r="0.9" fill="currentColor" />
      </Line>
      <Line className="mt-5" w={1.4}>
        <rect x="1.2" y="1.2" width="8.5" height="5.5" rx="1" />
        <path d="M7 1.500v5M12.500 3h1.500v8.500H5V9M2 14.500h13" />
        <path d="M5.500 12h5l.5 2.500H5z" fill="currentColor" />
      </Line>
      <Line className="mt-5" w={1.3}>
        <circle cx="8" cy="8" r="7" />
        <path d="M8 3.800V8l2.800 2" />
      </Line>
      <Line className="mt-5" w={1.3}>
        <path d={STAR} />
      </Line>
      <Line className="mt-auto mb-4" w={1.2}>
        <path d="M6.300 1h3.400l.5 2.300 1.500.8 2.200-.7 1.500 2.800L13.700 8l1.700 1.800-1.500 2.800-2.200-.7-1.500.8-.5 2.300H6.300l-.5-2.300-1.500-.8-2.200.7L.6 9.800 2.300 8 .6 6.200l1.500-2.800 2.200.7 1.500-.8z" />
        <circle cx="8" cy="8" r="2.3" />
      </Line>
    </aside>
  );
}

/* ---------- page ---------- */
const MATCHES: [string, string][] = [
  ["Margaret", "Mary"],
  ["Deborah", "Richard"],
  ["Vincent", "Margaret"],
  ["Esther", "Rick"],
  ["Richard", "John"],
  ["John", "Esther"],
  ["Rick", "Vincent"],
  ["Mary", "Deborah"],
];

function SantaPage() {
  return (
    <main className="relative flex-1 overflow-hidden border-t border-[#5a5a5a] bg-[#e8f3fa]">
      <Snow />
      <div className="relative pl-2 pr-[7px] text-black">
        <h1 className="pt-[21px] text-center text-[22px] font-medium leading-8 tracking-[0.2px]">Secret Santa Matchmaking</h1>
        <p className="mt-[27px] text-center text-[14.5px] leading-6">Below are the matches!</p>
        <p className="mt-[19px] text-center text-[14.5px] leading-6">Go back to the previous page and click generate to get new matches!</p>
        <hr className="mt-[23px] h-1 border-0 border-b border-[#808080] bg-[#cc1f1f]" />
        <div className="mt-2.5 text-[22.5px] text-[#34a65f]">
          {MATCHES.map(([giver, receiver]) => (
            <div key={giver} className="grid h-[57px] grid-cols-[1fr_301px_1fr] items-center">
              <span className="text-right">{giver}</span>
              <span className="text-center tracking-[0.2px] text-[#cc1f1f] underline decoration-1 underline-offset-[3px]">gives a gift to</span>
              <span>{receiver}</span>
            </div>
          ))}
        </div>
      </div>
    </main>
  );
}

export default function App() {
  return (
    <div className="flex h-[1080px] w-[1920px] flex-col overflow-hidden font-['Noto_Sans',sans-serif]">
      <SystemBar />
      <div className="flex min-h-0 flex-1">
        <Dock />
        <div className="flex min-w-0 flex-1 flex-col">
          <TabStrip />
          <Toolbar />
          <div className="flex min-h-0 flex-1">
            <SideRail />
            <SantaPage />
          </div>
        </div>
      </div>
    </div>
  );
}
